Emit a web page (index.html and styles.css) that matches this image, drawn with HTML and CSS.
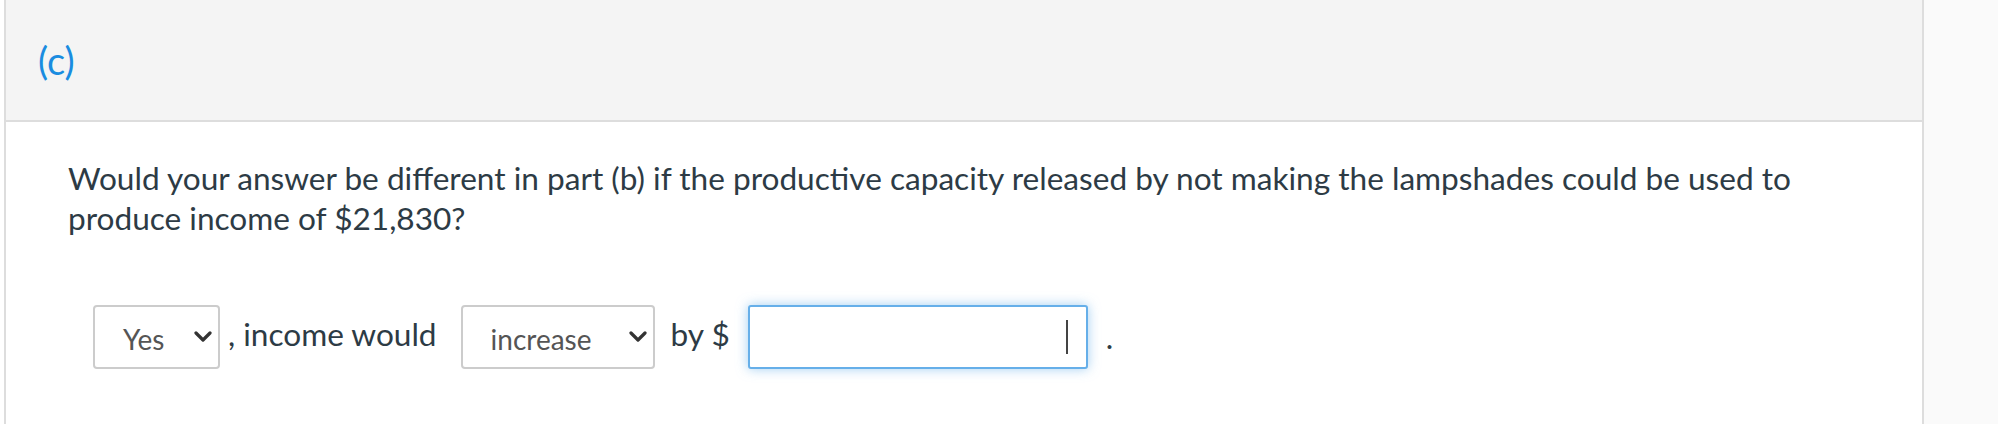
FILE: index.html
```html
<!DOCTYPE html>
<html>
<head>
<meta charset="utf-8">
<link rel="stylesheet" href="styles.css">
</head>
<body>
<div class="page">
  <div class="question">
    <div class="q-header"><span class="q-label">(c)</span></div>
    <div class="q-body">
      <p class="q-text">Would your answer be different in part (b) if the productive capacity released by not making the lampshades could be used to produce income of $21,830?</p>
      <div class="answer-row">
        <div class="select select-yes"><span class="select-value">Yes</span><svg class="chev" viewBox="0 0 18 11" width="18" height="11"><path d="M2 2 L9 9 L16 2" fill="none" stroke="#333" stroke-width="3.2" stroke-linecap="round" stroke-linejoin="round"/></svg></div>
        <span class="row-text comma">, income would</span>
        <div class="select select-inc"><span class="select-value">increase</span><svg class="chev" viewBox="0 0 18 11" width="18" height="11"><path d="M2 2 L9 9 L16 2" fill="none" stroke="#333" stroke-width="3.2" stroke-linecap="round" stroke-linejoin="round"/></svg></div>
        <span class="row-text">by $</span>
        <span class="input-wrap"><input class="amount" type="text" value=""><span class="caret"></span></span>
        <span class="row-text period">.</span>
      </div>
    </div>
  </div>
  <div class="sidebar"></div>
</div>
</body>
</html>
```

FILE: styles.css
```css
html, body {
  margin: 0;
  padding: 0;
  background: #ffffff;
}

body {
  font-family: Lato, "Open Sans", sans-serif;
  color: #2d3b45;
}

.page {
  display: flex;
  height: 424px;
  padding-left: 4px;
}

.question {
  width: 1916px;
  border-left: 2px solid #dddddd;
  border-right: 2px solid #dddddd;
  background: #ffffff;
}

.sidebar {
  flex: 1;
  background: #fafafa;
}

.q-header {
  height: 120px;
  background: #f4f4f4;
  border-bottom: 2px solid #dddddd;
  display: flex;
  align-items: center;
  padding-left: 32px;
}

.q-label {
  color: #1a8ce0;
  font-size: 38px;
  line-height: 1;
}

.q-body {
  padding: 36px 0 0 62px;
}

.q-text {
  margin: 0;
  font-size: 31.6px;
  line-height: 40px;
  width: 1780px;
}

.answer-row {
  display: flex;
  align-items: center;
  margin-top: 67px;
  margin-left: 25px;
}

.select {
  box-sizing: border-box;
  height: 64px;
  border: 2px solid #cccccc;
  border-radius: 4px;
  background: #ffffff;
  display: flex;
  align-items: center;
  justify-content: space-between;
  color: #555555;
  font-size: 28px;
  padding: 4px 6px 0 28px;
}

.select-yes {
  width: 127px;
}

.select-inc {
  width: 194px;
}

.chev {
  margin-top: -6px;
}

.row-text {
  font-size: 31.6px;
  line-height: 40px;
  margin-left: 16px;
  margin-right: 18px;
  padding-bottom: 6px;
}

.comma {
  margin-left: 8px;
  margin-right: 24px;
}

.input-wrap {
  position: relative;
  display: block;
}

.amount {
  box-sizing: border-box;
  width: 340px;
  height: 64px;
  border: 2px solid #66afe9;
  border-radius: 3px;
  box-shadow: 0 0 12px rgba(102, 175, 233, 0.6);
  outline: none;
  background: #ffffff;
  font-family: Lato, sans-serif;
  font-size: 26px;
  text-align: right;
  padding: 0 20px;
  display: block;
}

.caret {
  position: absolute;
  left: 318px;
  top: 15px;
  width: 2px;
  height: 34px;
  background: #444444;
}

.period {
  margin-left: 18px;
  padding-bottom: 0;
}
```
